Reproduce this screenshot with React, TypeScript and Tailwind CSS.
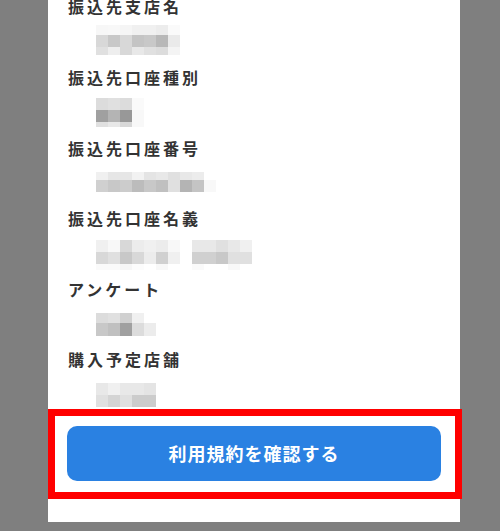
import React from 'react';

type MosaicRow = { h: string; c: string[] };

interface Item {
  label: string;
  mt: string;
  rows: MosaicRow[];
}

// Blurred (pixelated) values, 12px cells, grey levels as hex pairs
const items: Item[] = [
  {
    label: '振込先支店名',
    mt: 'mt-[12.6px]',
    rows: [
      { h: 'h-[10px]', c: ['f7', 'f8', 'f5', 'f0', 'f0', 'ec', 'fa'] },
      { h: 'h-[12px]', c: ['d8', 'c8', 'd8', 'c4', 'c8', 'b8', 'ea'] },
      { h: 'h-[8px]', c: ['e0', 'ee', 'd8', 'e8', 'e0', 'dc', 'f4'] },
    ],
  },
  {
    label: '振込先口座種別',
    mt: 'mt-[15px]',
    rows: [
      { h: 'h-[12px]', c: ['dc', 'e0', 'dc', 'fa'] },
      { h: 'h-[12px]', c: ['a0', 'b4', '98', 'f8'] },
      { h: 'h-[5px]', c: ['e0', 'e8', 'd8', 'f8'] },
    ],
  },
  {
    label: '振込先口座番号',
    mt: 'mt-[18.4px]',
    rows: [
      { h: 'h-[8px]', c: ['f0', 'e6', 'e6', 'f2', 'e4', 'e8', 'e0', 'e8', 'ec', 'ff'] },
      { h: 'h-[12px]', c: ['d0', 'c8', 'cc', 'bc', 'c8', 'c0', 'e0', 'b4', 'c4', 'f8'] },
    ],
  },
  {
    label: '振込先口座名義',
    mt: 'mt-[15.8px]',
    rows: [
      { h: 'h-[12px]', c: ['f0', 'f8', 'd8', 'ec', 'f0', 'ec', 'f8', 'ff', 'e8', 'e8', 'e0', 'e8', 'f0'] },
      { h: 'h-[12px]', c: ['d8', 'e0', 'c8', 'd8', 'ec', 'd0', 'f0', 'ff', 'd0', 'd0', 'c8', 'e0', 'e0'] },
      { h: 'h-[6px]', c: ['fa', 'fa', 'f6', 'fc', 'ff', 'f8', 'ff', 'ff', 'fa', 'ff', 'ff', 'f8', 'ff'] },
    ],
  },
  {
    label: 'アンケート',
    mt: 'mt-[18.2px]',
    rows: [
      { h: 'h-[10px]', c: ['dc', 'e0', 'd0', 'f0', 'ff'] },
      { h: 'h-[13px]', c: ['c8', 'c0', 'a0', 'dc', 'ec'] },
    ],
  },
  {
    label: '購入予定店舗',
    mt: 'mt-[17.6px]',
    rows: [
      { h: 'h-[12px]', c: ['e8', 'f0', 'e8', 'e8', 'e4'] },
      { h: 'h-[12px]', c: ['e0', 'd4', 'e0', 'cc', 'cc'] },
    ],
  },
];

function Mosaic({ rows, mt }: { rows: MosaicRow[]; mt: string }) {
  return (
    <div className={`${mt} ml-[28px] flex flex-col`}>
      {rows.map((row, i) => (
        <div key={i} className={`flex ${row.h}`}>
          {row.c.map((g, j) => (
            <div key={j} className="w-[12px] h-full" style={{ backgroundColor: `#${g}${g}${g}` }} />
          ))}
        </div>
      ))}
    </div>
  );
}

export default function App() {
  return (
    <div
      className="relative w-[500px] h-[531px] bg-[#7f7f7f] overflow-hidden"
      style={{ fontFamily: '"Noto Sans CJK JP", "Noto Sans", sans-serif' }}
    >
      {/* white page panel (scrolled: first label is cut at the top) */}
      <div className="ml-[48px] w-[412px] h-[522px] bg-white overflow-hidden flex flex-col">
        <div className="flex flex-col px-[20px] pt-[0.4px]">
          {items.map((item) => (
            <div key={item.label} className="h-[70.6px] shrink-0 flex flex-col">
              <div className="text-[16px] leading-[12px] font-bold tracking-[3px] text-[#333] whitespace-nowrap">
                {item.label}
              </div>
              <Mosaic rows={item.rows} mt={item.mt} />
            </div>
          ))}
        </div>

        <div className="px-[19px] mt-[2px]">
          <button className="w-full h-[55px] rounded-[10px] bg-[#2a81e2] text-white text-[18px] font-bold tracking-[1px] flex items-center justify-center">
            利用規約を確認する
          </button>
        </div>
      </div>

      {/* red highlight annotation over the button */}
      <div className="absolute left-[48px] top-[409px] w-[414px] h-[90px] border-[7px] border-[#ff0000] pointer-events-none" />
    </div>
  );
}
